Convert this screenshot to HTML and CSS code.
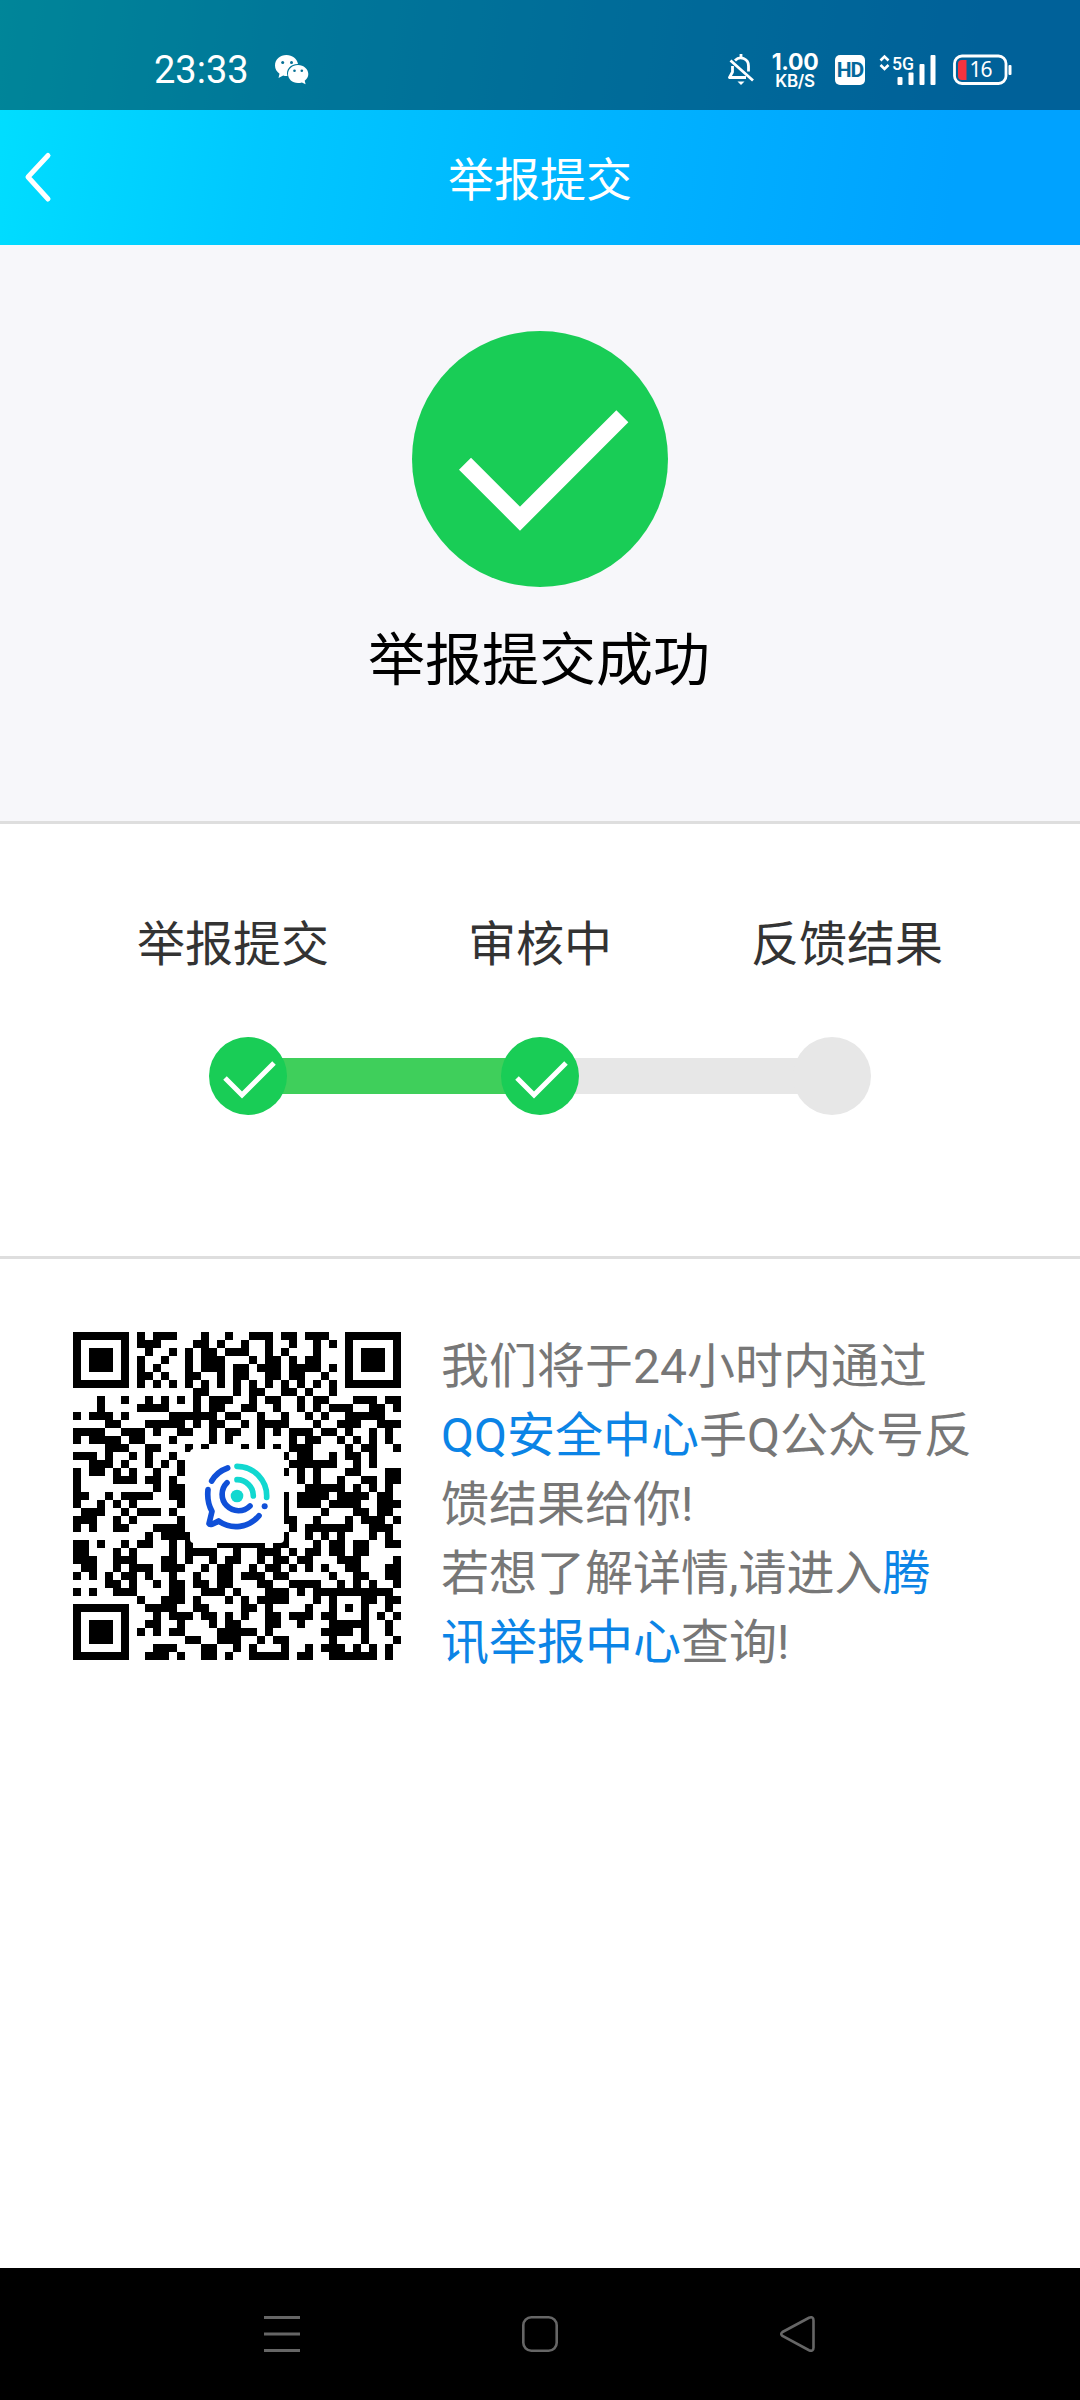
FILE: index.html
```html
<!DOCTYPE html>
<html lang="zh-CN">
<head>
<meta charset="utf-8">
<title>举报提交</title>
<link rel="stylesheet" href="styles.css">
</head>
<body>
<div class="top">
  <div class="status">
    <div class="status-left">
      <span class="time">23:33</span>
      <svg class="wechat" width="34" height="30" viewBox="0 0 34 30">
        <path fill="#fff" d="M11.500 0C5 0 0 4.600 0 10.500c0 3.500 1.800 6.300 4.500 8.200L3.500 23l4.700-2.500c1.400.4 2.700.6 4.200.5C10.500 14 16 8.800 23 9 22 3.700 17.300 0 11.500 0z"/>
        <path fill="#fff" d="M23 10c-5.700 0-10 4-10 9s4.300 9 10 9c1.500 0 2.700-.2 3.900-.6L30.600 29.300l-.9-3.600C32 24 33.300 21.700 33.300 19c0-5-4.600-9-10.300-9z"/>
        <g fill="#067095"><circle cx="7.700" cy="7.500" r="1.500"/><circle cx="16.500" cy="7.500" r="1.500"/><circle cx="19.500" cy="15.700" r="1.300"/><circle cx="26.800" cy="15.700" r="1.300"/></g>
      </svg>
    </div>
    <div class="status-right">
      <svg class="bell" width="26" height="32" viewBox="0 0 26 32" fill="none" stroke="#fff" stroke-width="2.800" stroke-linejoin="round">
        <path d="M7 6.500C12 1.500 20.500 4.500 20.500 12v5.500M4.500 12v6L1.500 23.500H18"/>
        <path d="M2.500 6.500 25 26.500M13 0v4"/>
        <path d="M9.500 27.500h7L13 31z" fill="#fff" stroke="none"/>
      </svg>
      <div class="speed"><span class="rate">1.00</span><span class="unit">KB/S</span></div>
      <span class="hd">HD</span>
      <svg class="signal" width="58" height="32" viewBox="0 0 58 32">
        <path d="M1.500 6.500 5.500 2.500l4 4M1.500 11l4 4 4-4" fill="none" stroke="#fff" stroke-width="2.600"/>
        <text class="net" x="13" y="15.500" textLength="22" lengthAdjust="spacingAndGlyphs">5G</text>
        <g fill="#fff"><rect x="18.500" y="23" width="5" height="8" rx="1"/><rect x="29.500" y="18.500" width="5" height="12.500" rx="1"/><rect x="40.500" y="10" width="5" height="21" rx="1"/><rect x="51.500" y="1" width="5" height="30" rx="1"/></g>
      </svg>
      <svg class="battery" width="59" height="32" viewBox="0 0 59 32">
        <rect x="1.500" y="2" width="51.500" height="27.500" rx="7.500" fill="none" stroke="#fff" stroke-width="2.800"/>
        <rect x="55.500" y="11" width="3" height="10" rx="1" fill="#fff"/>
        <path d="M9 6h4.500v20H9a4 4 0 0 1-4-4V10a4 4 0 0 1 4-4z" fill="#f5333f"/>
        <text class="level" x="16.500" y="23" textLength="23">16</text>
      </svg>
    </div>
  </div>
  <div class="header">
    <svg class="back" width="30" height="54" viewBox="0 0 30 54" fill="none" stroke="#fff" stroke-width="5" stroke-linecap="round" stroke-linejoin="round"><path d="M25 4.500 5 26 25 48"/></svg>
    <h1 class="title">举报提交</h1>
  </div>
</div>

<section class="result">
  <svg width="256" height="256" viewBox="0 0 768 768">
    <circle cx="384" cy="384" r="384" fill="#19cd56"/>
    <path d="M159 398 324 563 631 256" fill="none" stroke="#fff" stroke-width="51"/>
  </svg>
  <p class="result-text">举报提交成功</p>
</section>

<section class="progress">
  <div class="labels"><span>举报提交</span><span>审核中</span><span>反馈结果</span></div>
  <div class="track">
    <svg class="dot" width="78" height="78" viewBox="0 0 78 78"><circle cx="39" cy="39" r="39" fill="#19cd56"/><path d="M16 41 33 58 65 26" fill="none" stroke="#fff" stroke-width="5"/></svg>
    <div class="bar done"></div>
    <svg class="dot" width="78" height="78" viewBox="0 0 78 78"><circle cx="39" cy="39" r="39" fill="#19cd56"/><path d="M16 41 33 58 65 26" fill="none" stroke="#fff" stroke-width="5"/></svg>
    <div class="bar"></div>
    <svg class="dot" width="78" height="78" viewBox="0 0 78 78"><circle cx="39" cy="39" r="39" fill="#e7e7e7"/></svg>
  </div>
</section>

<section class="info">
  <div class="qr">
    <svg id="code" width="328" height="328" viewBox="0 0 41 41" shape-rendering="crispEdges"></svg>
    <svg class="logo" width="94" height="94" viewBox="30 26 282 282" fill="none" stroke-width="17" stroke-linecap="round" stroke-linejoin="round">
      <g stroke="#12d8d0"><path d="M171 78A89 89 0 0 1 260 171"/><path d="M171 118A49 49 0 0 1 220 167"/></g>
      <g stroke="#1050d8"><path d="M143 83A89 89 0 0 0 95 122"/><path d="M84 148Q80 185 96 213L87 250Q91 257 116 242A89 89 0 0 0 237 226"/><path d="M141 127A49 49 0 1 0 210 197"/></g>
      <circle cx="171" cy="167" r="19" fill="#12d8d0"/><circle cx="254" cy="198" r="9" fill="#1050d8"/>
    </svg>
  </div>
  <p class="message">我们将于24小时内通过<br><a>QQ安全中心</a>手Q公众号反<br>馈结果给你!<br>若想了解详情,请进入<a>腾<br>讯举报中心</a>查询!</p>
</section>

<nav class="nav">
  <svg width="36" height="36" viewBox="0 0 36 36" fill="none" stroke="#666" stroke-width="3"><path d="M0 1.500h36M0 18h36M0 34.500h36"/></svg>
  <svg width="36" height="36" viewBox="0 0 36 36" fill="none" stroke="#666" stroke-width="2.600"><rect x="1.300" y="1.300" width="33.400" height="33.400" rx="8"/></svg>
  <svg width="36" height="36" viewBox="0 0 36 36" fill="none" stroke="#666" stroke-width="2.600"><path d="M2.500 16 29 1.800Q33.500 0 33.500 4.500v27Q33.500 36 29 34.200L2.500 20Q0 18 2.500 16z"/></svg>
</nav>
<script src="qr.js"></script>
</body>
</html>
```
FILE: styles.css
```css
* { box-sizing: border-box; margin: 0; padding: 0; }
body {
  width: 1080px; height: 2400px; background: #fff; overflow: hidden;
  display: flex; flex-direction: column;
  font-family: Roboto, "Noto Sans CJK SC", sans-serif;
}
svg { display: block; flex: none; }
.top { background: linear-gradient(99deg, #00dfff 0%, #00c8ff 25%, #00b4ff 55%, #00a2ff 88%); }
.status {
  height: 110px; padding: 29px 68px 0 154px; background: rgba(0, 0, 0, .4);
  display: flex; justify-content: space-between; color: #fff;
}
.status-left, .status-right { display: flex; align-items: center; height: 80px; }
.time { width: 121px; font-size: 38px; line-height: 80px; padding-top: 1px; }
.wechat { margin-top: 2px; }
.status-right { height: 82px; }
.bell { margin-right: 16px; }
.speed { width: 50px; text-align: center; font-weight: 700; display: flex; flex-direction: column; margin-right: 15px; }
.rate { font: 700 23px/22px Inter, sans-serif; letter-spacing: -.3px; }
.unit { font: 600 17px/16px Inter, sans-serif; letter-spacing: -.3px; }
.hd {
  width: 30px; height: 30px; border-radius: 5px; background: #fff; color: #04689b;
  font: 700 21px/30px Roboto, sans-serif; letter-spacing: -1px; text-align: center; margin-right: 14px;
}
.net { font: 500 19px Roboto, sans-serif; fill: #fff; }
.signal { margin-right: 16px; overflow: visible; }
.level { font: 400 21px "Noto Sans", sans-serif; fill: #fff; }
.header { height: 135px; padding: 0 23px; display: grid; grid-template-columns: 100px 1fr 100px; align-items: center; }
.title { font-size: 46px; font-weight: 400; color: #fff; text-align: center; line-height: 64px; margin-top: 4px; }
.result {
  height: 579px; background: #f7f7fa; border-bottom: 3px solid #dedede; padding-top: 86px;
  display: flex; flex-direction: column; align-items: center;
}
.result-text { font-size: 57px; line-height: 84px; margin-top: 32px; padding-right: 2px; color: #000; }
.progress { height: 435px; border-bottom: 3px solid #dedede; padding: 86px 137px 0; }
.labels { display: flex; justify-content: space-between; font-size: 48px; line-height: 70px; color: #333; }
.track { display: flex; align-items: center; padding: 0 72px; margin-top: 57px; }
.bar { flex: 1; height: 36px; margin: 0 -10px; background: #e7e7e7; }
.bar.done { background: #3fcf5b; }
.dot { position: relative; }
.info { flex: 1; display: flex; align-items: flex-start; padding: 73px 73px 0; gap: 40px; }
.qr { display: grid; place-items: center; }
.qr > svg { grid-area: 1 / 1; }
.logo { background: #fff; border-radius: 4px; }
.message { font-size: 48px; line-height: 69px; color: #777; white-space: nowrap; }
.message a { color: #0b84e6; }
.nav { height: 132px; background: #000; display: flex; justify-content: space-between; padding: 48px 264px 0; }
```
FILE: qr.js
```js
// Each entry lists the dark modules of one row, outside the finder patterns.
const dark = [
  "8 10-12 16 19 22-24 26-27 29-31", "8-10 15-16 18 21 24 27 30 32", "9 12 14 16-17 19-21 24 26 30",
  "8 11 14 16-18 22 24-25 27 29-30", "8 10 14 16-18 20-21 23-25 27-30 32", "8-9 11 14-15 18 20-21 24-25 27-28 31",
  "8 10 12 14 16 18 20 22 24 26 28 30 32", "15-16 20 22-23 26-27 29 32",
  "3 6 9 11 13 15 17-19 22 24-25 28 30-31 35-37 39-40", "3 8-11 15 17-18 21-22 25 28 30 32-34 37-38 40",
  "0 2-4 6 12-17 19-20 23 26 29 31 34-38", "4-5 9-13 15 17-18 21 23-26 30 33-35 38-40",
  "0-3 6-8 10 13-14 17 19-20 23 25 27-29 31-32 34 37 39", "0 2-5 7-8 12 17 19 23 27 29-30 33 35 37 39",
  "4-6 9-10 14 16 21 23 25 27-29 34 36-37 40", "0-2 4 7 9 12 26 28-29 32 34-35 37",
  "2-4 6 9 11 13 27-32 35 37", "0 2-3 5 7 10 13 26 28 30 34-35 39-40",
  "0 5-7 9-10 12 28 30 33 36-37 39-40", "0 10 12-13 29-33 35 37 39",
  "0-1 4 6-9 12-13 26 28-31 33-36 38-39", "0 3 5 7 13 26 28-30 32-35 38-40",
  "1-3 6 8-10 12 26 31 35-36 38-39", "0-2 5 7 13 26-27 30 34 36-38 40",
  "0 2 5-6 10-13 27 29-34 37-39", "9 11-14 26 29 31 33 37 39",
  "0-1 3 6 8-9 12 14 18-23 25-26 30 32-33 35-36 39-40", "0-1 5 7 12 14-17 20 23-25 27 29-30 32-33 35-36",
  "0-2 5-7 11-12 14 17 19-20 23 25-26 28-29 33-35 40", "1-2 5 7-9 11-13 16 18-19 22 24-25 27 29 31 34-35 39-40",
  "0 2 4 6-7 9 12 15 18-19 21-23 25-26 32 35-36 39-40", "4-5 7 10 12-13 15-16 18-19 23-24 27-30 33 35 37 40",
  "0 2 5-7 12-13 16-18 20 24-26 28 30-39", "8 11-13 15 19 21 23-26 30 32 36-37 39-40",
  "9-12 15-16 21-22 24 29 32 34 36 39", "10 12-14 16-17 19 21 24-25 27-29 31-32 36 38 40",
  "9-10 13 17 19-20 24-25 28 32-36 39", "8 10 12-13 18-22 24 31-34 36 39",
  "14-15 18-20 23 25-26 32 36 40", "10-12 16-17 20 22 26 29 31-33 35 37 39", "9-11 13 16-17 19 22-26 28-29 32-37 39"
];
const svg = document.getElementById("code");
function rect(x, y, w, h, fill) {
  const r = document.createElementNS("http://www.w3.org/2000/svg", "rect");
  for (const [k, v] of Object.entries({ x, y, width: w, height: h, fill })) r.setAttribute(k, v);
  svg.appendChild(r);
}
dark.forEach((line, y) => line.split(" ").forEach(run => {
  const [a, b = a] = run.split("-").map(Number);
  rect(a, y, b - a + 1, 1, "#000");
}));
[[0, 0], [34, 0], [0, 34]].forEach(([x, y]) => {
  rect(x, y, 7, 7, "#000");
  rect(x + 1, y + 1, 5, 5, "#fff");
  rect(x + 2, y + 2, 3, 3, "#000");
});
```
